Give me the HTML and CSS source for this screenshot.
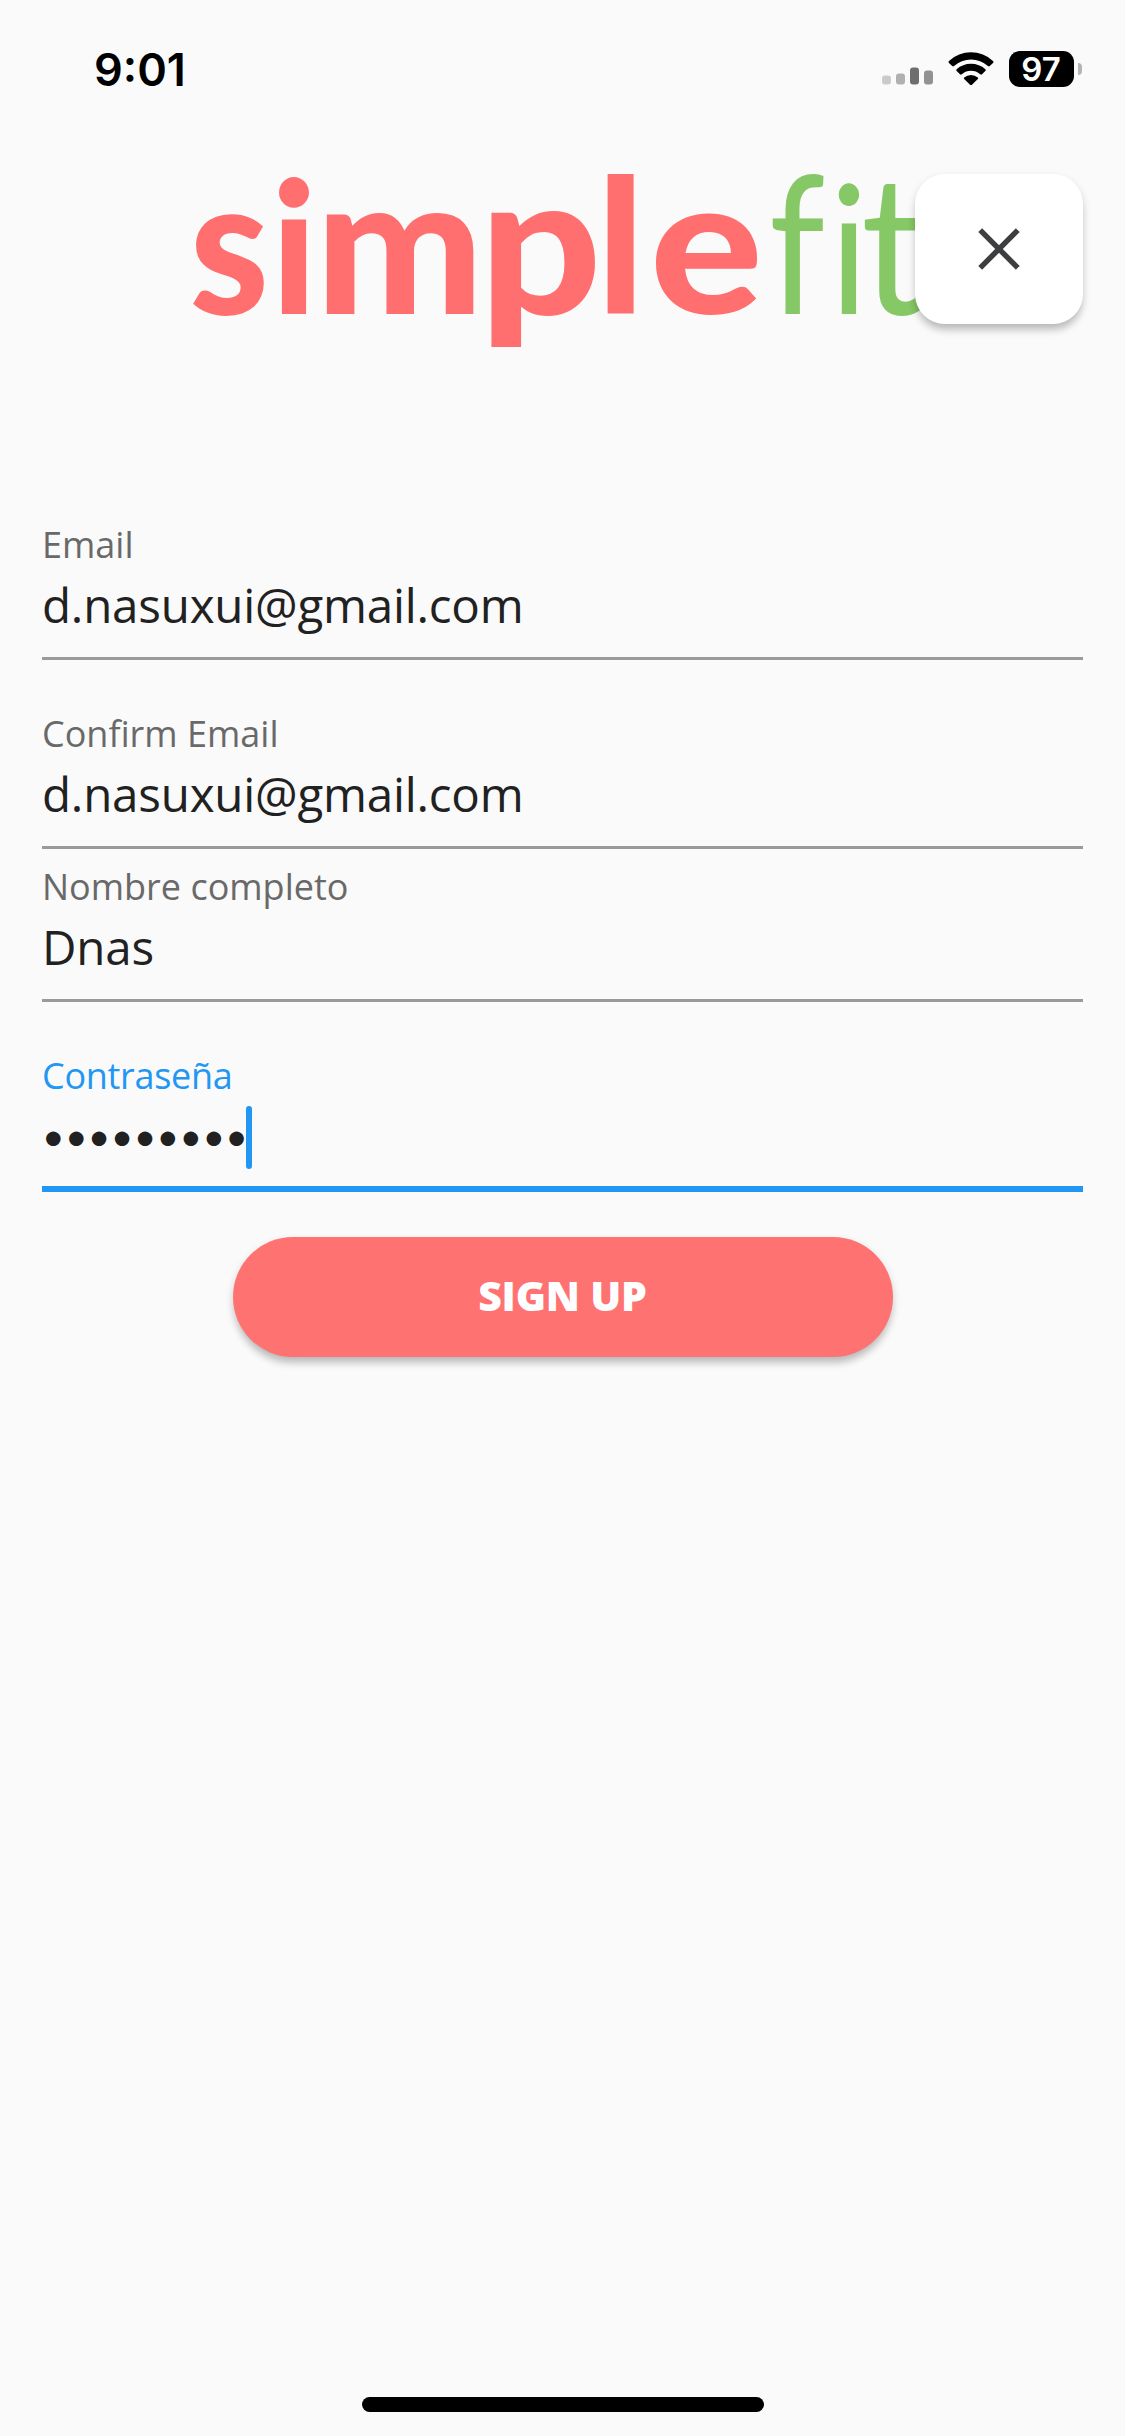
FILE: index.html
```
<!DOCTYPE html>
<html lang="es">
<head>
<meta charset="utf-8">
<title>Simplefit – Sign up</title>
<link rel="stylesheet" href="styles.css">
</head>
<body>
<div class="screen">
  <header class="status">
    <span class="time">9:01</span>
    <div class="indicators">
      <svg class="signal" width="51" height="18" viewBox="0 0 51 18">
        <rect x="0" y="8.5" width="9" height="9" rx="3" fill="#cbcbcb"/>
        <rect x="14" y="6.5" width="9" height="11" rx="3" fill="#b0b0b0"/>
        <rect x="28" y="0.5" width="9" height="17" rx="3" fill="#6e6e6e"/>
        <rect x="42" y="3.5" width="9" height="14" rx="3" fill="#929292"/>
      </svg>
      <svg class="wifi" width="46" height="34" viewBox="0 0 46 34">
        <path d="M1 8.9Q0 9.9 1 10.9L4.2 14Q5 14.8 6 14A25.5 25.5 0 0 1 40 14Q41 14.8 41.8 14L45 10.9Q46 9.9 45 8.9A32.5 32.5 0 0 0 1 8.9Z"/>
        <path d="M8.6 17.2Q7.8 18.2 8.7 19L12 22.3Q12.8 23 13.8 22.2A14 14 0 0 1 32.2 22.2Q33.2 23 34 22.3L37.3 19Q38.2 18.2 37.4 17.2A21.5 21.5 0 0 0 8.6 17.2Z"/>
        <path d="M16.2 25.4Q15.4 26.3 16.2 27.1L22 32.7Q23 33.5 24 32.7L29.8 27.1Q30.6 26.3 29.8 25.4A10.5 10.5 0 0 0 16.2 25.4Z"/>
      </svg>
      <div class="battery"><span class="level">97</span><span class="nub"></span></div>
    </div>
  </header>

  <div class="brand">
    <svg class="logo" width="760" height="262" viewBox="183 104 760 262" aria-label="simplefit">
      <g class="logo-simple">
        <text transform="matrix(.899 0 0 .958 189.4 313.5)">s</text>
        <text transform="matrix(.875 0 0 .92 271.2 313.5)">i</text>
        <text transform="matrix(.997 0 0 .962 315.5 313.5)">m</text>
        <text transform="matrix(1.072 0 0 .98 479.2 313.5)">p</text>
        <text transform="matrix(.94 0 0 .93 596.8 313.5)">l</text>
        <text transform="matrix(1.057 0 0 .958 649.7 313.5)">e</text>
      </g>
      <g class="logo-fit">
        <text transform="matrix(.8 0 0 .96 769 313.5)">f</text>
        <text transform="matrix(.8 0 0 .89 829.8 313.5)">i</text>
        <text transform="matrix(.9 0 0 .97 861 313.5)">t</text>
      </g>
    </svg>
    <button class="close" aria-label="Close">
      <svg width="42" height="42" viewBox="0 0 42 42"><path d="M2.2 2.2 39.8 39.8M39.8 2.2 2.2 39.8" stroke="#3d3e40" stroke-width="5.4"/></svg>
    </button>
  </div>

  <form class="form">
    <div class="field"><label class="label">Email</label><div class="value">d.nasuxui@gmail.com</div></div>
    <div class="field spaced"><label class="label">Confirm Email</label><div class="value">d.nasuxui@gmail.com</div></div>
    <div class="field tight"><label class="label">Nombre completo</label><div class="value">Dnas</div></div>
    <div class="field spaced focused"><label class="label">Contraseña</label><div class="value"><span class="dots">•••••••••</span><span class="caret"></span></div></div>
    <button class="submit" type="button">SIGN UP</button>
  </form>

  <div class="home"></div>
</div>
</body>
</html>
```
FILE: styles.css
```
* { box-sizing: border-box; }
body { margin: 0; background: #fafafa; font-family: "Open Sans", "Noto Sans", sans-serif; }
button { border: 0; padding: 0; font: inherit; }

.screen { display: flex; flex-direction: column; width: 1125px; height: 2436px; background: #fafafa; }

.status { display: flex; justify-content: space-between; height: 104px; padding: 42px 43px 0 94px; }
.time { font: 600 45px/56px Inter, sans-serif; color: #000; }
.indicators { display: flex; align-items: flex-start; padding-top: 9px; }
.signal { margin: 16px 15px 0 0; }
.wifi { margin: 1px 15px 0 0; }
.battery { display: flex; align-items: center; gap: 4px; height: 36px; }
.level { width: 65px; height: 36px; border-radius: 11px; background: #000; color: #fff; font: 600 33px/37px Inter, sans-serif; text-align: center; padding-right: 1px; }
.nub { width: 4px; height: 12px; border-radius: 0 4px 4px 0; background: #b4b4b4; }

.brand { position: relative; height: 421px; padding-left: 183px; }
.logo { display: block; font-family: Lato, sans-serif; font-size: 200px; overflow: visible; }
.logo-simple { fill: #ff6f6f; font-weight: 900; }
.logo-fit { fill: #86c766; font-weight: 400; }
.close { position: absolute; top: 70px; right: 42px; display: flex; align-items: center; justify-content: center; width: 168px; height: 150px; border-radius: 30px; background: #fff; box-shadow: 0 9px 9px -3px rgba(0,0,0,.14), 0 4px 9px rgba(0,0,0,.16); }

.form { display: flex; flex-direction: column; padding: 0 42px; }
.field { height: 135px; border-bottom: 3px solid #9a9a9a; }
.spaced { margin-top: 54px; }
.tight { margin-top: 18px; }
.label { display: block; height: 40px; font-size: 36px; line-height: 40px; color: #696969; }
.value { display: flex; height: 60px; margin-top: 9px; font-size: 47.5px; line-height: 61px; letter-spacing: -.2px; color: #212121; }
.focused { height: 136px; border-bottom: 6px solid #2196f3; }
.focused .label { color: #2196f3; letter-spacing: -.3px; }
.dots { width: 204px; font-family: Lato, sans-serif; font-size: 39px; line-height: 61px; letter-spacing: .3px; white-space: nowrap; }
.caret { flex: none; width: 6px; height: 63px; margin-top: 1px; border-radius: 3px; background: #2196f3; }

.submit { align-self: center; width: 660px; height: 120px; margin-top: 45px; padding-bottom: 4px; border-radius: 60px; background: #ff7272; color: #fff; font-size: 41px; font-weight: 800; letter-spacing: -.2px; box-shadow: 0 9px 9px -3px rgba(0,0,0,.14), 0 4px 9px rgba(0,0,0,.16); }

.home { align-self: center; width: 402px; height: 15px; margin-top: auto; margin-bottom: 24px; border-radius: 8px; background: #000; }
```
